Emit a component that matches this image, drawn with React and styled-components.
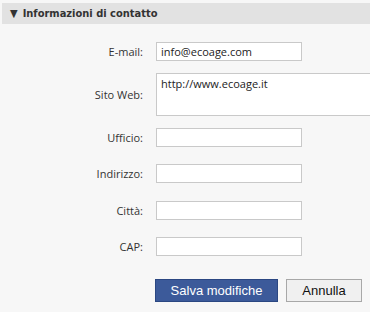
import React from "react";
import styled, { createGlobalStyle } from "styled-components";

const GlobalStyle = createGlobalStyle`
  html, body {
    margin: 0;
    padding: 0;
    background: #f7f7f7;
  }
  body {
    font-family: "Open Sans", "DejaVu Sans", sans-serif;
  }
`;

const Panel = styled.div`
  width: 370px;
  height: 312px;
  overflow: hidden;
  background: #f7f7f7;
  padding-top: 3px;
  box-sizing: border-box;
`;

const Header = styled.div`
  margin-left: 2px;
  height: 21px;
  background: #e2e2e2;
  display: flex;
  align-items: center;
  padding-left: 8px;
  gap: 5px;
  font-family: "DejaVu Sans Condensed", "Liberation Sans", sans-serif;
  font-size: 11px;
  font-weight: bold;
  color: #333;
`;

const Arrow = styled.span`
  font-size: 11px;
  color: #333;
`;

const Form = styled.div`
  display: grid;
  grid-template-columns: 143px 1fr;
  column-gap: 13px;
  padding-top: 18px;
`;

const Label = styled.label`
  justify-self: end;
  align-self: center;
  font-size: 11px;
  color: #333;
  margin-top: ${(p) => p.$space || 0}px;
`;

const Input = styled.input`
  box-sizing: border-box;
  width: 146px;
  height: 19px;
  margin-top: ${(p) => p.$space || 0}px;
  border: 1px solid #c9c9c9;
  background: #fff;
  padding: 0 4px;
  font-family: "Open Sans", "DejaVu Sans", sans-serif;
  font-size: 11px;
  color: #222;
  outline: none;
`;

const TextArea = styled.textarea`
  box-sizing: border-box;
  width: 220px;
  height: 43px;
  margin-top: ${(p) => p.$space || 0}px;
  border: 1px solid #c9c9c9;
  background: #fff;
  padding: 2px 4px;
  font-family: "Open Sans", "DejaVu Sans", sans-serif;
  font-size: 11px;
  color: #222;
  resize: none;
  outline: none;
`;

const Actions = styled.div`
  display: flex;
  gap: 8px;
  padding: 23px 0 0 155px;
`;

const Button = styled.button`
  height: 23px;
  padding: 0;
  width: ${(p) => p.$w}px;
  font-family: "Liberation Sans", Arial, sans-serif;
  font-size: 13px;
  border: 1px solid ${(p) => (p.$primary ? "#2b4782" : "#a8a8a8")};
  background: ${(p) => (p.$primary ? "#3c5a9a" : "#f0f0f0")};
  color: ${(p) => (p.$primary ? "#fff" : "#111")};
`;

const fields = [
  { label: "Ufficio:", space: 12 },
  { label: "Indirizzo:", space: 17 },
  { label: "Città:", space: 18 },
  { label: "CAP:", space: 17 },
];

export default function App() {
  return (
    <Panel>
      <GlobalStyle />
      <Header>
        <Arrow>▼</Arrow>
        Informazioni di contatto
      </Header>
      <Form>
        <Label>E-mail:</Label>
        <Input defaultValue="info@ecoage.com" />
        <Label $space={12}>Sito Web:</Label>
        <TextArea $space={12} defaultValue="http://www.ecoage.it" />
        {fields.map((f) => (
          <React.Fragment key={f.label}>
            <Label $space={f.space}>{f.label}</Label>
            <Input $space={f.space} />
          </React.Fragment>
        ))}
      </Form>
      <Actions>
        <Button $primary $w={123}>Salva modifiche</Button>
        <Button $w={76}>Annulla</Button>
      </Actions>
    </Panel>
  );
}
